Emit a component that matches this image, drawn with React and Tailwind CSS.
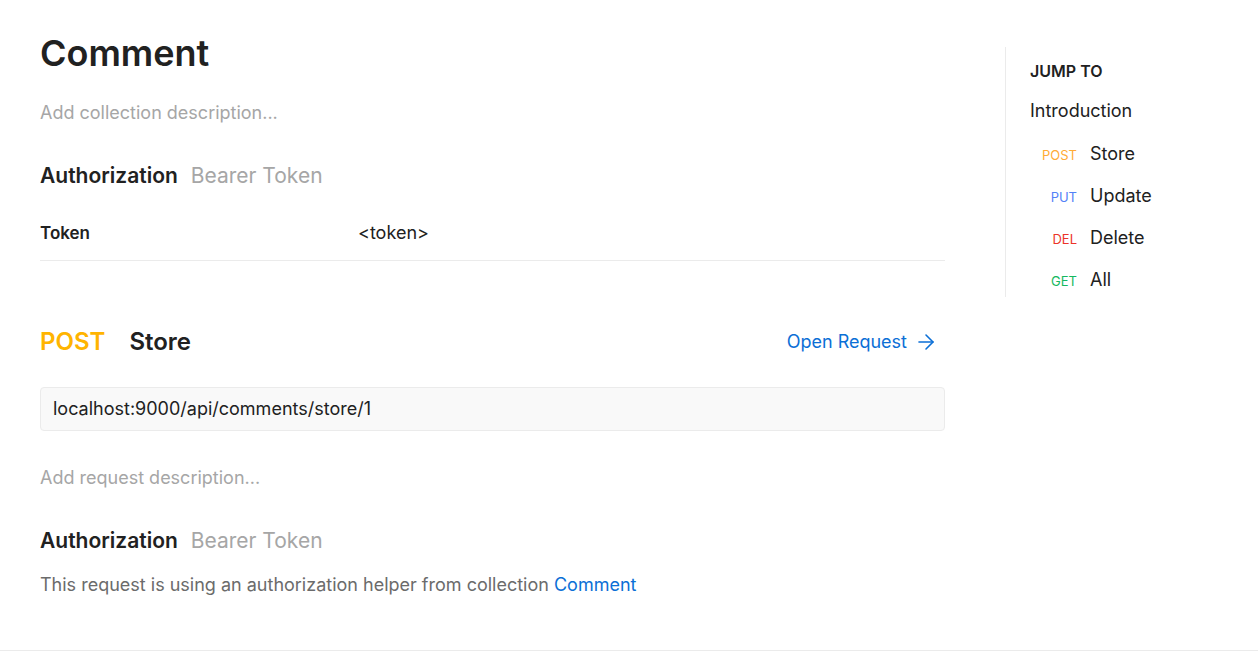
import React from 'react';
import { ArrowRight } from 'lucide-react';

const font = { fontFamily: 'Inter, "Noto Sans", sans-serif' };

const jumpLinks = [
  { method: 'POST', name: 'Store', color: 'text-[#ffab36]' },
  { method: 'PUT', name: 'Update', color: 'text-[#5281f7]' },
  { method: 'DEL', name: 'Delete', color: 'text-[#ec3428]' },
  { method: 'GET', name: 'All', color: 'text-[#14b860]' },
];

const AuthHeading = ({ className }) => (
  <h3 className={`flex items-baseline text-[21px] leading-7 ${className}`}>
    <span className="font-semibold text-[#212121]">Authorization</span>
    <span className="ml-[13px] text-[#a6a6a6]">Bearer Token</span>
  </h3>
);

export default function App() {
  return (
    <div className="w-[1258px] h-[652px] bg-white overflow-hidden" style={font}>
      <div className="flex border-b border-[#ebebeb] h-[651px]">
        {/* Main documentation column */}
        <main className="w-[905px] ml-10 pt-[31px] text-[#212121]">
          <h1 className="text-[36px] leading-[44px] font-semibold">Comment</h1>
          <p className="mt-6 text-[18px] leading-7 text-[#a6a6a6]">Add collection description...</p>

          <AuthHeading className="mt-[35px]" />
          <div className="mt-[19px] pt-3 pb-[15px] flex items-baseline border-b border-[#ebebeb] leading-6">
            <span className="w-[318px] text-[17px] font-semibold">Token</span>
            <span className="text-[18px]">&lt;token&gt;</span>
          </div>

          {/* Request */}
          <div className="mt-[65px] flex items-center justify-between h-8">
            <div className="flex items-baseline text-[24px] leading-8 font-semibold">
              <span className="text-[#ffb400]">POST</span>
              <span className="ml-6">Store</span>
            </div>
            <a className="flex items-center text-[18px] leading-7 text-[#0b6fd6] pr-[7px]">
              Open Request
              <ArrowRight className="ml-[7px] w-6 h-6" strokeWidth={1.6} />
            </a>
          </div>
          <div className="mt-[29px] h-[44px] flex items-center px-3 bg-[#f9f9f9] border border-[#ebebeb] rounded text-[18px] leading-7">
            localhost:9000/api/comments/store/1
          </div>
          <p className="mt-[33px] text-[18px] leading-7 text-[#a6a6a6]">Add request description...</p>

          <AuthHeading className="mt-[35px]" />
          <p className="mt-4 text-[18px] leading-7 text-[#6b6b6b]">
            This request is using an authorization helper from collection{' '}
            <a className="text-[#0b6fd6]">Comment</a>
          </p>
        </main>

        {/* Jump to sidebar */}
        <aside className="ml-[60px] mt-[47px] self-start w-[220px] border-l border-[#ebebeb] pl-6 pt-3 pb-[3px] text-[#212121]">
          <h4 className="text-[16px] leading-6 font-semibold">JUMP TO</h4>
          <p className="mt-[14px] text-[18px] leading-7">Introduction</p>
          <ul className="mt-[15px] flex flex-col gap-[14px]">
            {jumpLinks.map(l => (
              <li key={l.name} className="flex items-baseline">
                <span className={`w-[47px] text-right text-[13px] ${l.color}`}>{l.method}</span>
                <span className="ml-[13px] text-[18px] leading-7">{l.name}</span>
              </li>
            ))}
          </ul>
        </aside>
      </div>
    </div>
  );
}
